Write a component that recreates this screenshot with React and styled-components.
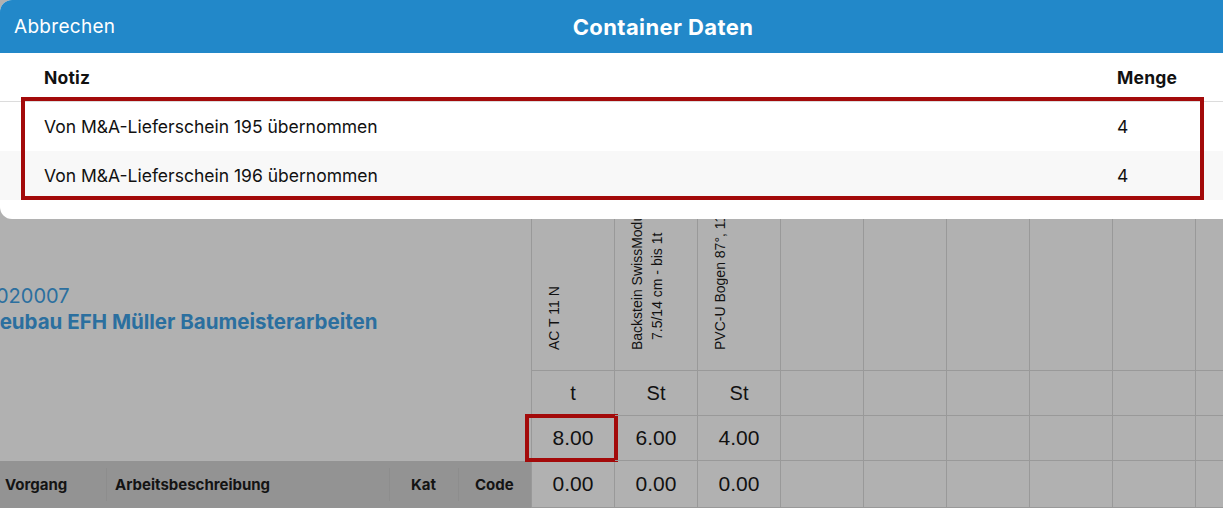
import React from 'react';
import styled, { createGlobalStyle } from 'styled-components';

const GlobalStyle = createGlobalStyle`
  html, body {
    margin: 0;
    padding: 0;
    background: #b1b1b1;
  }
  body {
    font-family: Inter, "Noto Sans", sans-serif;
    overflow: hidden;
  }
`;

const columns = [
  { lines: ['AC T 11 N'], unit: 't', qty: '8.00', used: '0.00', marked: true },
  { lines: ['Backstein SwissModul 15/19 cm', '7.5/14 cm - bis 1t'], unit: 'St', qty: '6.00', used: '0.00' },
  { lines: ['PVC-U Bogen 87°, 110 mm'], unit: 'St', qty: '4.00', used: '0.00' },
  { lines: [] }, { lines: [] }, { lines: [] }, { lines: [] }, { lines: [] }, { lines: [] }, { lines: [] },
];

const notes = [
  { text: 'Von M&A-Lieferschein 195 übernommen', amount: '4' },
  { text: 'Von M&A-Lieferschein 196 übernommen', amount: '4' },
];

function App() {
  return (
    <>
      <GlobalStyle />
      <Screen>
        <Backdrop>
          <LeftPanel>
            <ProjectInfo>
              <ProjectNumber>P2020007</ProjectNumber>
              <ProjectName>Neubau EFH Müller Baumeisterarbeiten</ProjectName>
            </ProjectInfo>
            <ListHeader>
              <ListHeaderCell $width={107} $pad={5}>Vorgang</ListHeaderCell>
              <ListHeaderCell $width={283} $pad={8}>Arbeitsbeschreibung</ListHeaderCell>
              <ListHeaderCell $width={69} $pad={21}>Kat</ListHeaderCell>
              <ListHeaderCell $last $pad={16}>Code</ListHeaderCell>
            </ListHeader>
          </LeftPanel>
          <Grid>
            {columns.map((col, idx) =>
              <Column key={idx}>
                <TitleCell>
                  <Vertical>
                    {col.lines.map((line, i) =>
                      <VLine key={i} $indent={i > 0 ? 10 : 0}>{line}</VLine>
                    )}
                  </Vertical>
                </TitleCell>
                <ValueCell $height={45} $font={20}>{col.unit}</ValueCell>
                <ValueCell $height={45} $marked={col.marked}>{col.qty}</ValueCell>
                <ValueCell $height={47}>{col.used}</ValueCell>
              </Column>
            )}
          </Grid>
        </Backdrop>

        <Modal>
          <ModalHeader>
            <CancelButton>Abbrechen</CancelButton>
            <ModalTitle>Container Daten</ModalTitle>
          </ModalHeader>
          <TableHead>
            <NoteCol $bold>Notiz</NoteCol>
            <AmountCol $bold>Menge</AmountCol>
          </TableHead>
          <TableBody>
            {notes.map((note, idx) =>
              <TableRow key={idx} $alt={idx % 2 === 1}>
                <NoteCol>{note.text}</NoteCol>
                <AmountCol>{note.amount}</AmountCol>
              </TableRow>
            )}
            <Annotation />
          </TableBody>
        </Modal>
      </Screen>
    </>
  );
}

export default App;

const Screen = styled.div`
  position: relative;
  width: 1223px;
  height: 508px;
  overflow: hidden;
  background: #b1b1b1;
`;

const Backdrop = styled.div`
  display: flex;
  height: 508px;
`;

const LeftPanel = styled.div`
  width: 531px;
  flex-shrink: 0;
  display: flex;
  flex-direction: column;
  overflow: hidden;
`;

const ProjectInfo = styled.div`
  padding-top: 284px;
  margin-left: -16px;
  color: #2b6f9f;
`;

const ProjectNumber = styled.div`
  font-size: 20px;
  line-height: 24px;
  margin-left: -13px;
`;

const ProjectName = styled.div`
  font-size: 20.5px;
  font-weight: 700;
  line-height: 28px;
`;

const ListHeader = styled.div`
  margin-top: auto;
  height: 47px;
  background: #939393;
  display: flex;
  align-items: center;
`;

const ListHeaderCell = styled.div`
  ${p => p.$width ? `width: ${p.$width}px;` : 'flex: 1;'}
  height: 33px;
  display: flex;
  align-items: center;
  padding-left: ${p => p.$pad}px;
  box-sizing: border-box;
  border-right: ${p => p.$last ? 'none' : '1px solid #8d8d8d'};
  font-size: 15px;
  font-weight: 700;
  color: #141414;
`;

const Grid = styled.div`
  display: flex;
`;

const Column = styled.div`
  width: 83px;
  box-sizing: border-box;
  flex-shrink: 0;
  border-left: 1px solid #999;
  display: flex;
  flex-direction: column;
`;

const TitleCell = styled.div`
  height: 370px;
  border-bottom: 1px solid #999;
  display: flex;
  align-items: flex-end;
  overflow: hidden;
`;

const Vertical = styled.div`
  writing-mode: vertical-rl;
  transform: rotate(180deg);
  height: 330px;
  margin-bottom: 20px;
  padding-right: 12px;
  font-family: "Liberation Sans", Arial, sans-serif;
  font-size: 14px;
  line-height: 20px;
  color: #111;
  white-space: nowrap;
`;

const VLine = styled.div`
  padding-inline-start: ${p => p.$indent}px;
`;

const ValueCell = styled.div`
  position: relative;
  height: ${p => p.$height - 1}px;
  border-bottom: 1px solid #999;
  display: flex;
  align-items: center;
  justify-content: center;
  font-family: "Liberation Sans", Arial, sans-serif;
  font-size: ${p => p.$font ?? 21}px;
  color: #111;
  ${p => p.$marked && `
    &::after {
      content: '';
      position: absolute;
      top: -2px;
      left: -7px;
      right: -4px;
      bottom: -2px;
      border: 4px solid #a30a0a;
    }
  `}
`;

const Modal = styled.div`
  position: absolute;
  top: 0;
  left: 0;
  width: 1326px;
  background: #fff;
  border-radius: 12px;
  overflow: hidden;
  padding-bottom: 19px;
`;

const ModalHeader = styled.div`
  position: relative;
  height: 53px;
  background: #2288c9;
  display: flex;
  align-items: center;
  justify-content: center;
  color: #fff;
`;

const CancelButton = styled.div`
  position: absolute;
  left: 14px;
  top: 0;
  height: 53px;
  display: flex;
  align-items: center;
  font-size: 19px;
  letter-spacing: 0.3px;
`;

const ModalTitle = styled.div`
  font-size: 22px;
  font-weight: 700;
  letter-spacing: 0.4px;
`;

const TableHead = styled.div`
  height: 48px;
  display: flex;
  align-items: center;
  border-bottom: 1px solid #dcdcdc;
`;

const TableBody = styled.div`
  position: relative;
`;

const TableRow = styled.div`
  height: 49px;
  display: flex;
  align-items: center;
  background: ${p => p.$alt ? '#f8f8f8' : '#fff'};
`;

const NoteCol = styled.div`
  flex: 1;
  padding-left: 44px;
  font-size: 17.5px;
  font-weight: ${p => p.$bold ? 700 : 400};
  letter-spacing: ${p => p.$bold ? 0.2 : 0}px;
  color: #111;
`;

const AmountCol = styled.div`
  width: 209px;
  font-size: 17.5px;
  font-weight: ${p => p.$bold ? 700 : 400};
  letter-spacing: ${p => p.$bold ? 0.2 : 0}px;
  color: #111;
`;

const Annotation = styled.div`
  position: absolute;
  top: -5px;
  left: 21px;
  width: 1183px;
  height: 103px;
  box-sizing: border-box;
  border: 4px solid #a30a0a;
  pointer-events: none;
`;
